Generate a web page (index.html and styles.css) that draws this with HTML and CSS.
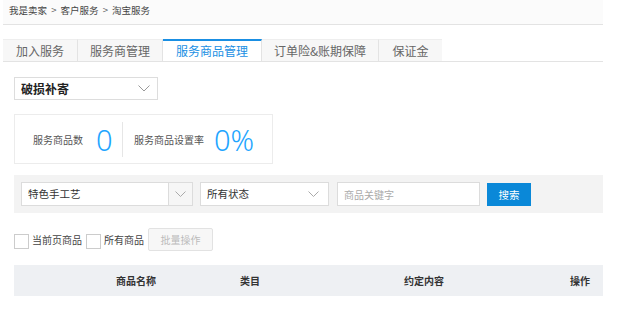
FILE: index.html
```html
<!DOCTYPE html>
<html lang="zh-CN">
<head>
  <meta charset="utf-8">
  <title>淘宝服务</title>
  <link rel="stylesheet" href="styles.css">
</head>
<body>
  <div class="page">

    <div class="crumbs">我是卖家 <span class="sep">&gt;</span> 客户服务 <span class="sep">&gt;</span> 淘宝服务</div>

    <div class="tabs">
      <a class="tab t1">加入服务</a>
      <a class="tab t2">服务商管理</a>
      <a class="tab t3 active">服务商品管理</a>
      <a class="tab t4">订单险&amp;账期保障</a>
      <a class="tab t5">保证金</a>
    </div>

    <div class="main">
      <div class="picker">
        <span>破损补寄</span>
        <svg class="chev" width="12" height="7" viewBox="0 0 12 7"><path d="M0.5 0.5 L6 6 L11.5 0.5" fill="none" stroke="#999" stroke-width="1"/></svg>
      </div>

      <div class="stats">
        <div class="stat s1">
          <span class="label">服务商品数</span>
          <span class="num">0</span>
        </div>
        <div class="stat s2">
          <span class="label">服务商品设置率</span>
          <span class="num">0%</span>
        </div>
      </div>

      <div class="filter">
        <div class="select cat">
          <span class="val">特色手工艺</span>
          <span class="arrow"><svg width="11" height="6" viewBox="0 0 11 6"><path d="M0.5 0.5 L5.5 5.5 L10.5 0.5" fill="none" stroke="#aaa" stroke-width="1"/></svg></span>
        </div>
        <div class="select state">
          <span class="val">所有状态</span>
          <span class="arrow"><svg width="11" height="6" viewBox="0 0 11 6"><path d="M0.5 0.5 L5.5 5.5 L10.5 0.5" fill="none" stroke="#aaa" stroke-width="1"/></svg></span>
        </div>
        <input class="kw" type="text" placeholder="商品关键字">
        <button class="search">搜索</button>
      </div>

      <div class="checks">
        <label class="check"><span class="box"></span>当前页商品</label>
        <label class="check"><span class="box"></span>所有商品</label>
        <button class="batch" disabled>批量操作</button>
      </div>

      <div class="thead">
        <span>商品名称</span>
        <span>类目</span>
        <span>约定内容</span>
        <span>操作</span>
      </div>
    </div>

  </div>
</body>
</html>
```

FILE: styles.css
```css
:root {
  --line: #e3e3e3;
  --text: #333;
  --muted: #666;
  --blue: #1a8fe3;
  --num: #1ea5ff;
  --font: "Noto Sans CJK SC";
}

body {
  margin: 0;
  background: #fff;
  color: var(--text);
  font: 12px var(--font), sans-serif;
}

.page {
  width: 600px;
  margin-left: 3px;
}

.crumbs {
  box-sizing: border-box;
  height: 25px;
  padding: 3px 0 0 6px;
  background: #fbfbfb;
  border-bottom: 1px solid var(--line);
  font-size: 9.5px;
  line-height: 14px;
  color: #444;
}

.crumbs .sep {
  margin: 0 2px;
  color: #666;
}

.tabs {
  display: flex;
  margin-top: 14px;
  border-bottom: 1px solid var(--line);
}

.tab {
  box-sizing: border-box;
  height: 22px;
  line-height: 22px;
  text-align: center;
  font-size: 12px;
  color: var(--muted);
  background: #f7f7f7;
  border-top: 1px solid #eee;
  border-right: 1px solid var(--line);
}

.t1 {width: 75px}
.t2 {width: 85px}
.t3 {width: 99px}
.t4 {width: 117px}
.t5 {width: 63px; border-right: 0}

.tab.active {
  background: #fff;
  color: var(--blue);
  border-top: 2px solid var(--blue);
  line-height: 20px;
}

.main {
  padding-left: 11px;
}

.picker {
  box-sizing: border-box;
  display: flex;
  align-items: center;
  justify-content: space-between;
  width: 144px;
  height: 23px;
  margin-top: 15px;
  padding: 0 7px 0 6px;
  border: 1px solid #ddd;
  font-size: 12px;
  font-weight: bold;
  color: #222;
}

.stats {
  box-sizing: border-box;
  display: flex;
  align-items: center;
  width: 259px;
  height: 50px;
  margin-top: 14px;
  border: 1px solid #ececec;
}

.stat {
  box-sizing: border-box;
  display: flex;
  align-items: center;
  height: 35px;
  white-space: nowrap;
}

.s1 {
  width: 108px;
  padding-left: 18px;
  border-right: 1px solid #e6e6e6;
}

.s2 {padding-left: 11px}

.label {
  font-size: 10px;
  color: #555;
}

.num {
  margin-left: 13px;
  font: 300 29px "Noto Sans", sans-serif;
  color: var(--num);
}

.s2 .num {margin-left: 10px}

.filter {
  display: flex;
  align-items: center;
  gap: 7px;
  height: 38px;
  margin-top: 11px;
  padding-left: 7px;
  background: #f3f3f3;
}

.select {
  box-sizing: border-box;
  display: flex;
  height: 24px;
  background: #fff;
  border: 1px solid #dcdcdc;
  font-size: 10.5px;
}

.select .val {
  flex: 1;
  padding-left: 6px;
  line-height: 22px;
}

.select .arrow {
  display: flex;
  align-items: center;
  justify-content: center;
  width: 23px;
}

.cat {width: 172px}
.cat .arrow {
  background: #f6f6f6;
  border-left: 1px solid #dcdcdc;
}

.state {width: 129px}
.state .arrow {width: 30px}

.kw {
  box-sizing: border-box;
  width: 143px;
  height: 24px;
  margin-left: 1px;
  padding: 0 6px;
  border: 1px solid #dcdcdc;
  outline: 0;
  font: 10px var(--font), sans-serif;
}

.kw::placeholder {color: #aaa}

.search {
  width: 44px;
  height: 23px;
  border: 0;
  background: #0a88d8;
  color: #fff;
  font: 10.5px var(--font), sans-serif;
}

.checks {
  display: flex;
  align-items: center;
  height: 23px;
  margin-top: 15px;
  font-size: 10px;
  color: #444;
}

.check {
  display: flex;
  align-items: center;
  margin-right: 4px;
}

.box {
  box-sizing: border-box;
  width: 15px;
  height: 15px;
  margin-right: 3px;
  margin-top: 4px;
  border: 1px solid #ccc;
  background: #fff;
}

.batch {
  width: 65px;
  height: 23px;
  border: 1px solid #e2e2e2;
  border-radius: 2px;
  background: #f7f7f7;
  color: #bbb;
  font: 10px var(--font), sans-serif;
}

.thead {
  display: grid;
  grid-template-columns: 124px 164px 166px 1fr;
  align-items: center;
  height: 31px;
  margin-top: 14px;
  padding-left: 102px;
  background: #eef0f3;
  font-size: 10px;
  font-weight: bold;
  color: #333;
}
```
